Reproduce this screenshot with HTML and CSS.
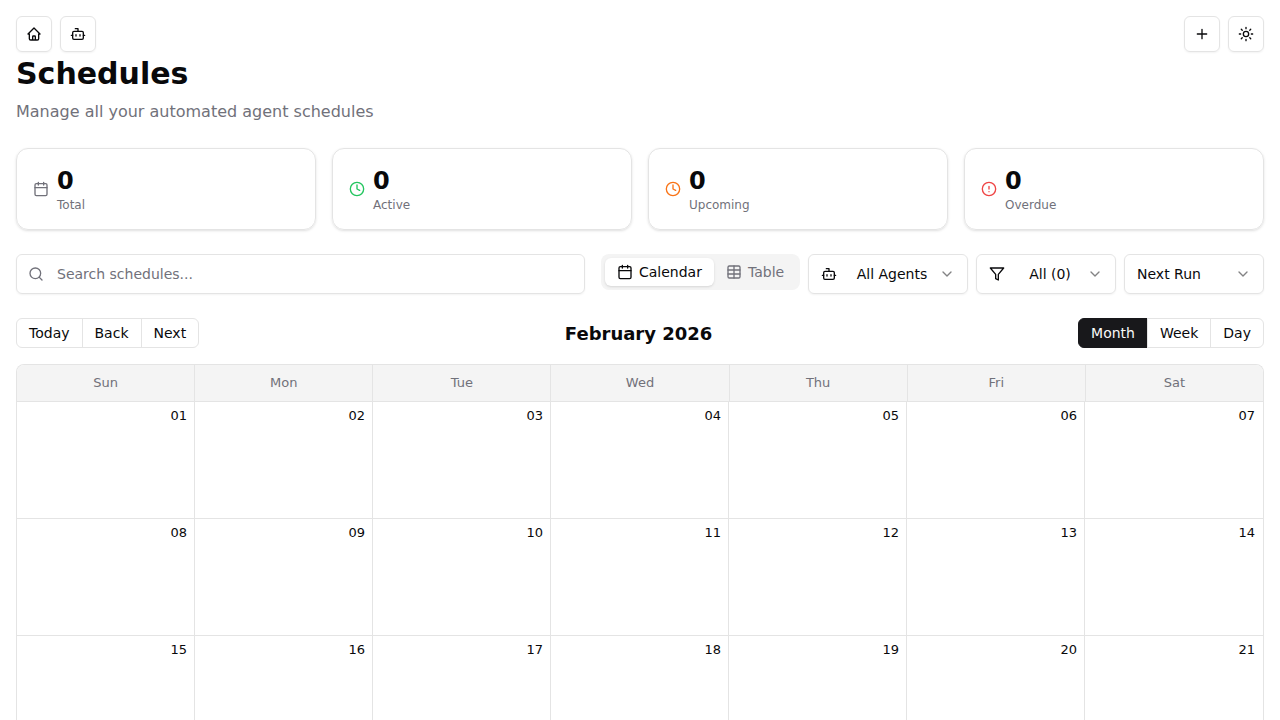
FILE: index.html
```html
<!DOCTYPE html>
<html lang="en">
<head>
<meta charset="utf-8">
<title>Schedules</title>
<link rel="stylesheet" href="styles.css">
</head>
<body>
<svg class="sprite" aria-hidden="true">
  <symbol id="house" viewBox="0 0 24 24"><path d="M5 12H3l9-9 9 9h-2M5 12v7a2 2 0 0 0 2 2h10a2 2 0 0 0 2-2v-7M10 21v-5a1 1 0 0 1 1-1h2a1 1 0 0 1 1 1v5"/></symbol>
  <symbol id="bot" viewBox="0 0 24 24"><path d="M12 8V4H8M2 14h2M20 14h2M15 13v2M9 13v2"/><rect width="16" height="12" x="4" y="8" rx="2"/></symbol>
  <symbol id="plus" viewBox="0 0 24 24"><path d="M5 12h14M12 5v14"/></symbol>
  <symbol id="sun" viewBox="0 0 24 24"><circle cx="12" cy="12" r="4"/><path d="M12 2v2M12 20v2M4.93 4.93l1.41 1.41M17.66 17.66l1.41 1.41M2 12h2M20 12h2M6.34 17.66l-1.41 1.41M19.07 4.93l-1.41 1.41"/></symbol>
  <symbol id="calendar" viewBox="0 0 24 24"><path d="M8 2v4M16 2v4M3 10h18"/><rect width="18" height="18" x="3" y="4" rx="2"/></symbol>
  <symbol id="clock" viewBox="0 0 24 24"><circle cx="12" cy="12" r="10"/><path d="M12 6v6l4 2"/></symbol>
  <symbol id="alert" viewBox="0 0 24 24"><circle cx="12" cy="12" r="10"/><path d="M12 8v4M12 16h.01"/></symbol>
  <symbol id="search" viewBox="0 0 24 24"><circle cx="11" cy="11" r="8"/><path d="m21 21-4.3-4.3"/></symbol>
  <symbol id="table" viewBox="0 0 24 24"><path d="M12 3v18M3 9h18M3 15h18"/><rect width="18" height="18" x="3" y="3" rx="2"/></symbol>
  <symbol id="funnel" viewBox="0 0 24 24"><path d="M22 3H2l8 9.46V19l4 2v-8.54L22 3z"/></symbol>
  <symbol id="chevron" viewBox="0 0 24 24"><path d="m6 9 6 6 6-6"/></symbol>
</svg>
<main class="page">
  <nav class="topbar">
    <div class="actions">
      <button class="icon-button" aria-label="Home"><svg class="icon"><use href="#house"/></svg></button>
      <button class="icon-button" aria-label="Agents"><svg class="icon"><use href="#bot"/></svg></button>
    </div>
    <div class="actions">
      <button class="icon-button" aria-label="New schedule"><svg class="icon"><use href="#plus"/></svg></button>
      <button class="icon-button" aria-label="Theme"><svg class="icon"><use href="#sun"/></svg></button>
    </div>
  </nav>
  <header class="heading">
    <h1 class="title">Schedules</h1>
    <p class="subtitle">Manage all your automated agent schedules</p>
  </header>
  <section class="stats">
    <div class="stat"><svg class="icon muted"><use href="#calendar"/></svg><div><p class="stat-value">0</p><p class="stat-label">Total</p></div></div>
    <div class="stat"><svg class="icon green"><use href="#clock"/></svg><div><p class="stat-value">0</p><p class="stat-label">Active</p></div></div>
    <div class="stat"><svg class="icon orange"><use href="#clock"/></svg><div><p class="stat-value">0</p><p class="stat-label">Upcoming</p></div></div>
    <div class="stat"><svg class="icon red"><use href="#alert"/></svg><div><p class="stat-value">0</p><p class="stat-label">Overdue</p></div></div>
  </section>
  <section class="filters">
    <label class="search"><svg class="icon muted"><use href="#search"/></svg><input class="search-input" placeholder="Search schedules..."></label>
    <div class="controls">
      <div class="tabs">
        <button class="tab tab-active"><svg class="icon"><use href="#calendar"/></svg>Calendar</button>
        <button class="tab"><svg class="icon"><use href="#table"/></svg>Table</button>
      </div>
      <button class="select select-wide"><svg class="icon lead"><use href="#bot"/></svg><span>All Agents</span><svg class="icon chevron"><use href="#chevron"/></svg></button>
      <button class="select"><svg class="icon lead"><use href="#funnel"/></svg><span>All (0)</span><svg class="icon chevron"><use href="#chevron"/></svg></button>
      <button class="select"><span>Next Run</span><svg class="icon chevron"><use href="#chevron"/></svg></button>
    </div>
  </section>
  <section class="toolbar">
    <div class="group"><button class="group-button">Today</button><button class="group-button">Back</button><button class="group-button">Next</button></div>
    <h2 class="month-label">February 2026</h2>
    <div class="group"><button class="group-button group-active">Month</button><button class="group-button">Week</button><button class="group-button">Day</button></div>
  </section>
  <section class="calendar">
    <div class="weekdays"><div class="weekday">Sun</div><div class="weekday">Mon</div><div class="weekday">Tue</div><div class="weekday">Wed</div><div class="weekday">Thu</div><div class="weekday">Fri</div><div class="weekday">Sat</div></div>
    <div class="week"><div class="day">01</div><div class="day">02</div><div class="day">03</div><div class="day">04</div><div class="day">05</div><div class="day">06</div><div class="day">07</div></div>
    <div class="week"><div class="day">08</div><div class="day">09</div><div class="day">10</div><div class="day">11</div><div class="day">12</div><div class="day">13</div><div class="day">14</div></div>
    <div class="week week-last"><div class="day">15</div><div class="day">16</div><div class="day">17</div><div class="day">18</div><div class="day">19</div><div class="day">20</div><div class="day">21</div></div>
  </section>
</main>
</body>
</html>
```
FILE: styles.css
```css
* { box-sizing: border-box; margin: 0; padding: 0; }
body {
  background: #fff;
  color: #09090b;
  font: 14px/20px "DejaVu Sans", sans-serif;
}
button, input { font: inherit; color: inherit; background: none; border: 0; }
.sprite { display: none; }
.page {
  display: flex;
  flex-direction: column;
  height: 720px;
  padding: 16px 16px 0;
}
.icon {
  width: 16px;
  height: 16px;
  flex-shrink: 0;
  fill: none;
  stroke: currentColor;
  stroke-width: 2;
  stroke-linecap: round;
  stroke-linejoin: round;
}
.muted { color: #71717a; }
.green { color: #22c55e; }
.orange { color: #f97316; }
.red { color: #ef4444; }

.topbar { display: flex; justify-content: space-between; }
.actions { display: flex; gap: 8px; }
.icon-button {
  display: flex;
  align-items: center;
  justify-content: center;
  width: 36px;
  height: 36px;
  border: 1px solid #e4e4e4;
  border-radius: 6px;
  box-shadow: 0 1px 2px rgba(0, 0, 0, .05);
}
.heading { padding-top: 4px; }
.title { font-size: 30px; line-height: 36px; font-weight: 700; }
.subtitle { margin-top: 8px; font-size: 16px; line-height: 24px; color: #71717a; }

.stats { display: grid; grid-template-columns: repeat(4, 1fr); gap: 16px; margin-top: 24px; }
.stat {
  display: flex;
  align-items: center;
  gap: 8px;
  height: 82px;
  padding: 0 16px;
  border: 1px solid #e4e4e4;
  border-radius: 12px;
  box-shadow: 0 1px 3px rgba(0, 0, 0, .1), 0 1px 2px -1px rgba(0, 0, 0, .1);
}
.stat-value { font-size: 24px; line-height: 32px; font-weight: 700; }
.stat-label { font-size: 12px; line-height: 16px; color: #71717a; }

.filters { display: flex; gap: 16px; margin-top: 24px; }
.search {
  display: flex;
  flex: 1;
  align-items: center;
  gap: 13px;
  height: 40px;
  padding: 0 11px;
  border: 1px solid #e4e4e4;
  border-radius: 6px;
  box-shadow: 0 1px 2px rgba(0, 0, 0, .05);
}
.search-input { flex: 1; outline: 0; }
.search-input::placeholder { color: #71717a; opacity: 1; }
.controls { display: flex; align-items: flex-start; gap: 8px; }
.tabs {
  display: flex;
  width: 199px;
  height: 36px;
  padding: 4px;
  border-radius: 8px;
  background: #f4f4f4;
}
.tab {
  display: flex;
  align-items: center;
  gap: 6px;
  height: 28px;
  padding: 0 12px;
  border-radius: 6px;
  color: #71717a;
}
.tab-active { background: #fff; color: #09090b; box-shadow: 0 1px 3px rgba(0, 0, 0, .1), 0 1px 2px -1px rgba(0, 0, 0, .1); }
.select {
  display: flex;
  align-items: center;
  justify-content: space-between;
  width: 140px;
  height: 40px;
  padding: 0 12px;
  border: 1px solid #e4e4e4;
  border-radius: 6px;
  box-shadow: 0 1px 2px rgba(0, 0, 0, .05);
}
.select-wide { width: 160px; }
.lead { margin-right: 8px; }
.chevron { opacity: .5; }

.toolbar { display: flex; align-items: center; justify-content: space-between; height: 30px; margin-top: 24px; }
.group { display: flex; }
.group-button {
  height: 30px;
  padding: 0 12px;
  border: 1px solid #e4e4e4;
}
.group-button + .group-button { margin-left: -1px; }
.group-button:first-child { border-radius: 6px 0 0 6px; }
.group-button:last-child { border-radius: 0 6px 6px 0; }
.group-button.group-active { background: #18181b; border-color: #18181b; color: #fafafa; }
.month-label { padding-top: 2px; font-size: 18px; line-height: 28px; font-weight: 600; }

.calendar {
  flex: 1;
  min-height: 0;
  margin-top: 16px;
  border: 1px solid #e4e4e4;
  border-bottom: 0;
  border-radius: 8px 8px 0 0;
  overflow: hidden;
}
.weekdays { display: flex; height: 37px; background: #f4f4f4; border-bottom: 1px solid #e4e4e4; }
.weekday { flex: 1 1 0; font-size: 13px; line-height: 36px; text-align: center; color: #71717a; }
.weekday + .weekday { border-left: 1px solid #e4e4e4; }
.week { display: grid; grid-template-columns: repeat(7, 178px); height: 117px; border-bottom: 1px solid #e4e4e4; }
.week-last { height: 84px; border-bottom: 0; }
.day { padding: 4px 7px 0 0; border-right: 1px solid #e4e4e4; font-size: 13px; text-align: right; }
.day:last-child { padding-right: 8px; border-right: 0; }
```
